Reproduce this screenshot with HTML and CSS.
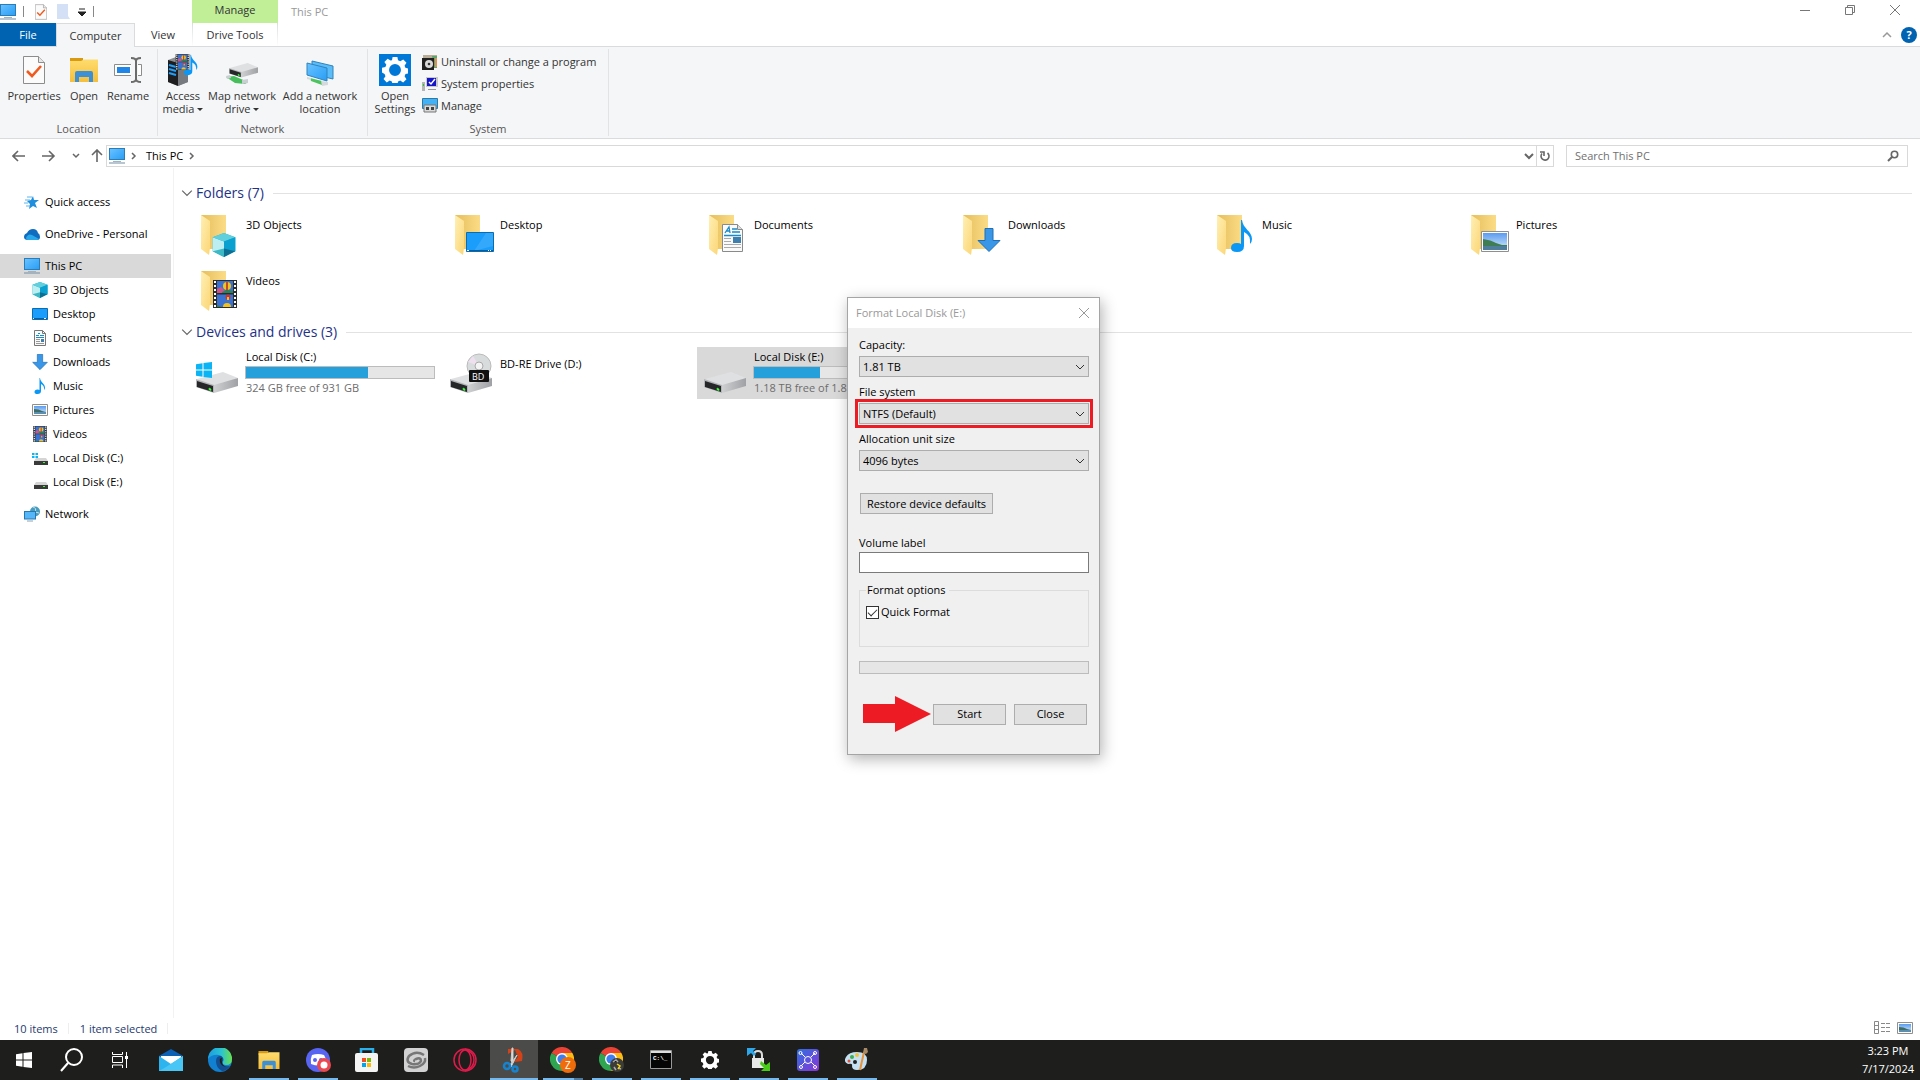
FILE: index.html
```html
<!DOCTYPE html>
<html lang="en">
<head>
<meta charset="utf-8">
<title>This PC</title>
<link rel="stylesheet" href="styles.css">
</head>
<body>
<svg class="sprite" aria-hidden="true">
  <defs>
    <linearGradient id="g-screen" x1="0" y1="0" x2="1" y2="1"><stop offset="0" stop-color="#6cc4ff"/><stop offset=".5" stop-color="#48b0fb"/><stop offset="1" stop-color="#2a9df4"/></linearGradient>
    <linearGradient id="g-back" x1="0" y1="0" x2="1" y2="0"><stop offset="0" stop-color="#e6be5c"/><stop offset="1" stop-color="#fbdc86"/></linearGradient>
    <linearGradient id="g-front" x1="0" y1="0" x2="1" y2="1"><stop offset="0" stop-color="#fff0b4"/><stop offset="1" stop-color="#fbd676"/></linearGradient>
    <linearGradient id="g-sky" x1="0" y1="0" x2="0" y2="1"><stop offset="0" stop-color="#5b9bf0"/><stop offset="1" stop-color="#d8ecfb"/></linearGradient>
    <linearGradient id="g-drive" x1="0" y1="0" x2="1" y2="0"><stop offset="0" stop-color="#cfd0d2"/><stop offset="1" stop-color="#a0a1a4"/></linearGradient>
    <linearGradient id="g-edge" x1="0" y1="0" x2="1" y2="0"><stop offset="0" stop-color="#1b9de2"/><stop offset=".55" stop-color="#2bc3d2"/><stop offset="1" stop-color="#6ae04f"/></linearGradient>
    <linearGradient id="g-hub" x1="0" y1="0" x2="1" y2="1"><stop offset="0" stop-color="#2f6fe0"/><stop offset="1" stop-color="#8a35d6"/></linearGradient>
    <linearGradient id="g-yel" x1="0" y1="0" x2="0" y2="1"><stop offset="0" stop-color="#ffdc6e"/><stop offset="1" stop-color="#f5bf3c"/></linearGradient>
  </defs>
  <symbol id="pc" viewBox="0 0 16 16"><rect x=".5" y=".5" width="15" height="11" fill="url(#g-screen)" stroke="#2b7db8"/><path d="M4 13h8v1H4z" fill="#9db4c6"/><path d="M0 14.500h16v1H0z" fill="#6f8da3"/></symbol>
  <symbol id="check-doc" viewBox="0 0 22 28"><path d="M.5.500h15l6 6v21H.5z" fill="#fbfbfb" stroke="#8c8c8c"/><path d="M15.500.5v6h6" fill="#e6e6e6" stroke="#8c8c8c"/><path d="M4 15l5 5 9-10" fill="none" stroke="#f05a1e" stroke-width="2.600"/></symbol>
  <symbol id="open-folder" viewBox="0 0 28 24"><path d="M0 0h13v5H0z" fill="#d99a12"/><path d="M0 3h11l3-1.500h14V24H0z" fill="url(#g-yel)"/><path d="M5 24V15q0-2 2-2h14q2 0 2 2v9h-4v-5H9v5z" fill="#3d8fd6"/></symbol>
  <symbol id="rename" viewBox="0 0 28 26"><path d="M17 7.500H.5v11H17M24 7.500h3.500v11H24" fill="#fff" stroke="#8c8c8c"/><path d="M3 10h13v6H3z" fill="#1f86e8"/><path d="M17 1q5 0 5 3 0-3 5-3M22 4v18M17 25q5 0 5-3 0 3 5 3" fill="none" stroke="#6b6b6b" stroke-width="2"/></symbol>
  <symbol id="film" viewBox="0 0 24 28"><path d="M0 0h24v28H0z" fill="#2d2d2d"/><path d="M4 1h16v12H4zM4 14.500h16V27H4z" fill="#3a72d4"/><path d="M2 1v26M22 1v26" stroke="#fff" stroke-width="2" stroke-dasharray="2 2"/><circle cx="14" cy="6" r="4" fill="#f2c21c"/><path d="M14 2v9" stroke="#b3242c" stroke-width="1.500"/><path d="M4 9l4-2 4 4v2H4z" fill="#c9558b"/><path d="M9 12l5-2 6 1v2H9z" fill="#278455"/><circle cx="15" cy="17" r="2.500" fill="#c8343a"/><path d="M14 17h2v3h-2z" fill="#f2c21c"/><path d="M10 27a4 4 0 018 0z" fill="#f2c21c"/><path d="M4 25l5 2H4z" fill="#278455"/></symbol>
  <symbol id="note" viewBox="0 0 22 32"><path d="M11 0c1 9 10 11 10 19q0 3-2 5 1-9-6-12v14q0 6-7 6-6 0-6-4 0-5 6-5 3 0 4 1V0z" fill="#0a97f5"/></symbol>
  <symbol id="media" viewBox="0 0 32 32"><path d="M1 6l8-3 12 3v22l-10 4L1 28z" fill="#8c8f93"/><path d="M1 6l10 3v23L1 28z" fill="#1e1e20"/><path d="M2 11l7 2M2 15l7 2M2 19l7 2" stroke="#1ea0ff" stroke-width="2"/><path d="M11 9l10-3v22l-10 4z" fill="#777b80"/><use href="#film" x="8" y="0" width="15" height="16"/><use href="#note" x="17" y="0" width="14" height="22"/></symbol>
  <symbol id="drive" viewBox="0 0 42 22"><path d="M1 8L27 1l15 6-24 10z" fill="#dfe0e2"/><path d="M18 14l24-7v8l-24 7z" fill="url(#g-drive)"/><path d="M0 8l18 6v8L0 16z" fill="#b4b5b8"/><path d="M1 10l16 5v6L1 16z" fill="#262728"/><path d="M13 17l2 1v1.500l-2-.7z" fill="#3dff3d" stroke="#3dff3d" stroke-width=".6"/></symbol>
  <symbol id="net-drive" viewBox="0 0 32 22"><path d="M0 15l8-1 14 6-3 2-10-1z" fill="#48bd5c"/><path d="M0 14l4-1 1 3-4 1zM16 18l6-1v4l-6 1z" fill="#c9ced3"/><use href="#drive" x="3" y="0" width="29" height="16"/></symbol>
  <symbol id="net-loc" viewBox="0 0 28 26"><path d="M6 1l21 5v13L6 14z" fill="#5abcf8" stroke="#2f83bd"/><path d="M1 3l20 5v13L1 15z" fill="url(#g-screen)" stroke="#2f83bd"/><path d="M4 18l12 3v4L5 21z" fill="#4cc35e"/><path d="M1 17l4 1v2l-4-1zM15 21l7 1v3l-6 1z" fill="#d5d9dc"/></symbol>
  <symbol id="gear" viewBox="0 0 24 24"><path fill-rule="evenodd" d="M9.800 0h4.400l.6 3.100 2.100.9 2.700-1.800 3 3.100-1.800 2.700.8 2 3.200.7v4.300l-3.100.7-.9 2.100 1.800 2.700-3.100 3-2.700-1.800-2 .8-.6 3.200H9.800l-.7-3.100-2-.9-2.700 1.800-3-3.100 1.800-2.700-.8-2L0 14.300V9.900l3.100-.6.9-2.100-1.800-2.700 3-3L7.900 3.300l1.300-.4zM12 6.500a5.500 5.500 0 100 11 5.500 5.500 0 000-11z"/></symbol>
  <symbol id="settings" viewBox="0 0 32 32"><path d="M0 0h32v32H0z" fill="#0078d7"/><use href="#gear" x="3" y="3" width="26" height="26" fill="#fff"/></symbol>
  <symbol id="uninstall" viewBox="0 0 16 16"><path d="M1 1h14v5H1z" fill="#b9ad98"/><path d="M10 2h5v12h-3z" fill="#5aa66b"/><path d="M0 4h12v12H0z" fill="#202020"/><circle cx="7" cy="10" r="4" fill="#d9d9d9"/><circle cx="7" cy="10" r="1.300" fill="#333"/><path d="M13 4h2v9h-2z" fill="#e88b5a"/></symbol>
  <symbol id="sysprop" viewBox="0 0 16 16"><path d="M0 6h3v9H0z" fill="#b5b5b5"/><path d="M1 8h1v2H1z" fill="#2c2"/><path d="M4 1h12v10H4z" fill="#c9c9c9"/><path d="M5 2h9v8H5z" fill="#1616c8"/><path d="M7 6l2 2 4-5" fill="none" stroke="#fff" stroke-width="1.500"/><path d="M6 13h8v1H6z" fill="#999"/></symbol>
  <symbol id="manage" viewBox="0 0 16 16"><path d="M.5.500h15v10H.5z" fill="#43b1f5" stroke="#2e78a6"/><path d="M2 7h12v7H2z" fill="#dadada" stroke="#777"/><path d="M4 9h3v3H4zM9 9h3v3H9z" fill="#444"/></symbol>
  <symbol id="star" viewBox="0 0 16 16"><path d="M9 2l1 4 5 0-4 3 2 5-4-2-4 3 1-5-3-3 4-1z" fill="#1f8fdd"/><path d="M3 3h5M1 6h5M0 9h4M2 12h4" stroke="#58b4ee"/></symbol>
  <symbol id="cloud" viewBox="0 0 16 11"><path d="M4 11q-4 0-4-3t3-4q2-4 6-4 4 0 5 4 2 1 2 4t-3 3z" fill="#0f6cbf"/><path d="M4 11q-2 0-2-2 2-5 6-3l7 4q-1 1-2 1z" fill="#28a8ea"/></symbol>
  <symbol id="cube" viewBox="0 0 16 17"><path d="M8 0l8 3v10l-8 4-8-4V3z" fill="#18b1d0"/><path d="M0 3l8 3v8l-8-1z" fill="#bdeef2"/><path d="M8 0l8 3-8 3-8-3z" fill="#62cfdc"/><path d="M8 6l8-3v10l-8 1z" fill="#0aa0d0"/><path d="M0 13l8-2v6z" fill="#3db9c6"/><path d="M16 13l-8-2v6z" fill="#0f6f93"/></symbol>
  <symbol id="desk" viewBox="0 0 28 20"><path d="M.5.500h27v19H.5z" fill="#1a9dfb" stroke="#0b6cb0"/><path d="M27 1v13L8 19 20 1z" fill="#46b0fd" opacity=".6"/><path d="M1 18h26v1H1z" fill="#0b5c98"/><path d="M1 18h2v1H1zM22 18h1v1h-1zM24 18h1v1h-1z" fill="#fff"/></symbol>
  <symbol id="desk16" viewBox="0 0 16 12"><path d="M.5.500h15v11H.5z" fill="#1a9dfb" stroke="#0b6cb0"/><path d="M1 10h14v1H1z" fill="#0b5c98"/><path d="M1 10h1v1H1zM12 10h2v1h-2z" fill="#fff"/></symbol>
  <symbol id="doc" viewBox="0 0 21 28"><path d="M.5.500h15l5 5v22H.5z" fill="#fafafa" stroke="#8a8a8a"/><path d="M15.500.5v5h5" fill="#ddd" stroke="#8a8a8a"/><path d="M3 9l4-6 1 6M4 7h4M10 5h5M10 8h8M2 11.500h17" fill="none" stroke="#1b8ac8" stroke-width="1.300"/><path d="M11 13h8v6h-8z" fill="#3e7fae"/><path d="M2 14.500h7M2 17.500h7M2 20.500h17M2 23.500h17" stroke="#aaa"/></symbol>
  <symbol id="doc16" viewBox="0 0 12 16"><path d="M.5.500h8l3 3v12H.5z" fill="#fafafa" stroke="#777"/><path d="M8.500.5v3h3" fill="none" stroke="#777"/><path d="M2 5.500h3M4 3.500h2M6 5.500h4M2 7.500h8" stroke="#1b8ac8"/><path d="M7 9h3v3H7z" fill="#3e7fae"/><path d="M2 9.500h4M2 11.500h4M2 13.500h8" stroke="#999"/></symbol>
  <symbol id="down" viewBox="0 0 24 24"><path d="M8 .5h8v12h7L12 23.500 1 12.500h7z" fill="#3a97e8" stroke="#1d6fb8"/></symbol>
  <symbol id="pic" viewBox="0 0 28 21"><path d="M.5.500h27v20H.5z" fill="#fff" stroke="#8f8f8f"/><path d="M2 2h24v17H2z" fill="url(#g-sky)"/><path d="M2 8q8 1 13 4l6 2 5 0v2H2z" fill="#3f7d55"/><path d="M2 15h24v4H2z" fill="#4f7d9c"/></symbol>
  <symbol id="pic16" viewBox="0 0 16 12"><path d="M.5.500h15v11H.5z" fill="#fff" stroke="#8f8f8f"/><path d="M2 2h12v8H2z" fill="url(#g-sky)"/><path d="M2 5q5 0 8 2l4 1H2z" fill="#3f6d65"/><path d="M2 8h12v2H2z" fill="#5b8fb0"/></symbol>
  <symbol id="sdrive" viewBox="0 0 16 16"><path d="M4 8h10l2 3H2z" fill="#d5d5d5"/><path d="M2 11h14v4H2z" fill="#3a3a3a"/><path d="M11 12h2v1h-2z" fill="#3f3"/></symbol>
  <symbol id="win" viewBox="0 0 16 16"><path d="M0 2.200l6.500-.9v6.200H0zM7.500 1.100L16 0v7.500H7.500zM0 8.500h6.500v6.200L0 13.800zM7.500 8.500H16V16l-8.500-1.100z"/></symbol>
  <symbol id="sdrive-c" viewBox="0 0 16 16"><use href="#sdrive" width="16" height="16"/><path d="M0 3h2.500v2H0zM3.500 3H6v2H3.500zM0 6h2.500v2H0zM3.500 6H6v2H3.500z" fill="#0bb5f5"/></symbol>
  <symbol id="network" viewBox="0 0 16 16"><circle cx="11" cy="5.500" r="5" fill="#4a9cbf"/><path d="M9 1q4 1 2 5l4 1" stroke="#c5e4ee" fill="none"/><rect x=".5" y="5.500" width="11" height="7.500" fill="#55b7f9" stroke="#2878b0"/><path d="M3 15h6" stroke="#8ba2b3"/></symbol>
  <symbol id="folder" viewBox="0 0 36 42"><path d="M0 0h25v34H0z" fill="url(#g-back)"/><path d="M0 0l9 6v27l-1 7-8-6z" fill="url(#g-front)"/></symbol>
  <symbol id="chev-d" viewBox="0 0 10 10"><path d="M1 3l4 4 4-4" fill="none" stroke="currentColor"/></symbol>
  <symbol id="chev-r" viewBox="0 0 10 10"><path d="M3 2l3 3-3 3" fill="none" stroke="currentColor" stroke-width="1.500"/></symbol>
  <symbol id="close" viewBox="0 0 10 10"><path d="M0 0l10 10M10 0L0 10" stroke="currentColor"/></symbol>
  <symbol id="chrome" viewBox="0 0 24 24"><path d="M12 12L1.600 6A12 12 0 0122.400 6z" fill="#ea4335"/><path d="M12 12L1.600 6A12 12 0 0012 24l5.500-9z" fill="#2fa552"/><path d="M12 12h0V6h10.400A12 12 0 0112 24l6-10z" fill="#fbbc14"/><circle cx="12" cy="12" r="6" fill="#fff"/><circle cx="12" cy="12" r="4.600" fill="#3d7ff0"/></symbol>
</svg>

<div class="desktop">
<header>
  <div class="titlebar">
    <div class="quick">
      <svg width="16" height="16"><use href="#pc"/></svg><i></i>
      <svg width="12" height="16"><use href="#check-doc"/></svg>
      <svg width="13" height="16" viewBox="0 0 13 16"><path d="M0 0h11v12l2 3H0z" fill="#d3e0f5"/></svg>
      <svg width="8" height="8" viewBox="0 0 8 8"><path d="M1 1h6M0 4h8L4 8z" stroke="#222" stroke-width="1" fill="#222"/></svg><i></i>
    </div>
    <div class="context">Manage</div>
    <h1>This PC</h1>
    <div class="winctl">
      <button aria-label="Minimize"><svg width="10" height="10"><path d="M0 5.500h10" stroke="#777"/></svg></button>
      <button aria-label="Restore"><svg width="10" height="10" fill="none" stroke="#777"><path d="M.5 2.500h7v7h-7zM2.500 2.500v-2h7v7h-2"/></svg></button>
      <button aria-label="Close"><svg width="10" height="10"><use href="#close"/></svg></button>
    </div>
  </div>
  <nav class="tabs">
    <button class="tab file">File</button>
    <button class="tab computer">Computer</button>
    <button class="tab view">View</button>
    <button class="tab tools">Drive Tools</button>
    <div class="tabs-end"><button aria-label="Collapse ribbon"><svg width="10" height="10"><path d="M1 7l4-4 4 4" fill="none" stroke="#999" stroke-width="1.500"/></svg></button><button class="help" aria-label="Help">?</button></div>
  </nav>
  <div class="ribbon">
    <section class="group location">
      <div class="tools-row">
        <button class="big w60"><span class="ico"><svg width="22" height="28"><use href="#check-doc"/></svg></span>Properties</button>
        <button class="big w40"><span class="ico"><svg width="28" height="24"><use href="#open-folder"/></svg></span>Open</button>
        <button class="big w48"><span class="ico"><svg width="28" height="26"><use href="#rename"/></svg></span>Rename</button>
      </div>
      <h2>Location</h2>
    </section>
    <section class="group network">
      <div class="tools-row">
        <button class="big w42"><span class="ico"><svg width="32" height="32"><use href="#media"/></svg></span>Access<br>media<b class="tri"></b></button>
        <button class="big w76"><span class="ico low"><svg width="32" height="22"><use href="#net-drive"/></svg></span>Map network<br>drive<b class="tri"></b></button>
        <button class="big w80"><span class="ico low"><svg width="28" height="26"><use href="#net-loc"/></svg></span>Add a network<br>location</button>
      </div>
      <h2>Network</h2>
    </section>
    <section class="group system">
      <div class="tools-row">
        <button class="big w46"><span class="ico"><svg width="32" height="32"><use href="#settings"/></svg></span>Open<br>Settings</button>
        <div class="smalls">
          <button><svg width="16" height="16"><use href="#uninstall"/></svg>Uninstall or change a program</button>
          <button><svg width="16" height="16"><use href="#sysprop"/></svg>System properties</button>
          <button><svg width="16" height="16"><use href="#manage"/></svg>Manage</button>
        </div>
      </div>
      <h2>System</h2>
    </section>
  </div>
  <div class="address">
    <div class="nav">
      <button aria-label="Back"><svg width="14" height="12" viewBox="0 0 14 12"><path d="M13 6H1M6 1L1 6l5 5" fill="none" stroke="currentColor" stroke-width="1.600"/></svg></button>
      <button aria-label="Forward"><svg width="14" height="12" viewBox="0 0 14 12"><path d="M0 6h12M7 1l5 5-5 5" fill="none" stroke="currentColor" stroke-width="1.600"/></svg></button>
      <button class="recent" aria-label="Recent locations"><svg width="8" height="8" viewBox="0 0 8 8"><path d="M1 2l3 3 3-3" fill="none" stroke="currentColor" stroke-width="1.500"/></svg></button>
      <button aria-label="Up"><svg width="12" height="14" viewBox="0 0 12 14"><path d="M6 13V1M1 6l5-5 5 5" fill="none" stroke="currentColor" stroke-width="1.600"/></svg></button>
    </div>
    <div class="path">
      <svg width="16" height="16"><use href="#pc"/></svg>
      <svg class="sep" width="10" height="10"><use href="#chev-r"/></svg>
      <a href="#pc">This PC</a>
      <svg class="sep" width="10" height="10"><use href="#chev-r"/></svg>
      <button class="drop" aria-label="Previous locations"><svg width="10" height="10"><path d="M1 3l4 4 4-4" fill="none" stroke="#666" stroke-width="2"/></svg></button>
      <button class="refresh" aria-label="Refresh"><svg width="12" height="12" viewBox="0 0 12 12"><path d="M8.500 3A4 4 0 113 3.500M1 2h4v4" fill="none" stroke="#666" stroke-width="1.600"/></svg></button>
    </div>
    <label class="search"><input type="text" placeholder="Search This PC" aria-label="Search This PC"><svg width="12" height="12"><circle cx="7.500" cy="4.500" r="3.200" fill="none" stroke="#666" stroke-width="1.600"/><path d="M5 7L1 11" stroke="#666" stroke-width="2"/></svg></label>
  </div>
</header>

<div class="body">
  <nav class="side">
    <a href="#q" class="top"><svg width="16" height="16"><use href="#star"/></svg>Quick access</a>
    <a href="#o" class="top"><svg width="16" height="11"><use href="#cloud"/></svg>OneDrive - Personal</a>
    <a href="#t" class="on"><svg width="16" height="16"><use href="#pc"/></svg>This PC</a>
    <a href="#1" class="sub"><svg width="16" height="16"><use href="#cube"/></svg>3D Objects</a>
    <a href="#2" class="sub"><svg width="16" height="12"><use href="#desk16"/></svg>Desktop</a>
    <a href="#3" class="sub"><svg width="16" height="16"><use href="#doc16"/></svg>Documents</a>
    <a href="#4" class="sub"><svg width="16" height="16"><use href="#down"/></svg>Downloads</a>
    <a href="#5" class="sub"><svg width="16" height="16"><use href="#note"/></svg>Music</a>
    <a href="#6" class="sub"><svg width="16" height="12"><use href="#pic16"/></svg>Pictures</a>
    <a href="#7" class="sub"><svg width="16" height="16"><use href="#film"/></svg>Videos</a>
    <a href="#8" class="sub"><svg width="16" height="16"><use href="#sdrive-c"/></svg>Local Disk (C:)</a>
    <a href="#9" class="sub last"><svg width="16" height="16"><use href="#sdrive"/></svg>Local Disk (E:)</a>
    <a href="#n"><svg width="16" height="16"><use href="#network"/></svg>Network</a>
  </nav>
  <main>
    <h2 class="head"><svg width="12" height="12"><use href="#chev-d"/></svg>Folders (7)</h2>
    <div class="tiles">
      <div class="tile"><svg width="48" height="48"><use href="#folder" x="6" y="5" width="36" height="42"/><use href="#cube" x="17" y="23" width="24" height="24"/></svg><span>3D Objects</span></div>
      <div class="tile"><svg width="48" height="48"><use href="#folder" x="6" y="5" width="36" height="42"/><use href="#desk" x="17" y="22" width="28" height="20"/></svg><span>Desktop</span></div>
      <div class="tile"><svg width="48" height="48"><use href="#folder" x="6" y="5" width="36" height="42"/><use href="#doc" x="19" y="14" width="21" height="28"/></svg><span>Documents</span></div>
      <div class="tile"><svg width="48" height="48"><use href="#folder" x="6" y="5" width="36" height="42"/><use href="#down" x="20" y="18" width="24" height="24"/></svg><span>Downloads</span></div>
      <div class="tile"><svg width="48" height="48"><use href="#folder" x="6" y="5" width="36" height="42"/><use href="#note" x="20" y="10" width="22" height="32"/></svg><span>Music</span></div>
      <div class="tile"><svg width="48" height="48"><use href="#folder" x="6" y="5" width="36" height="42"/><use href="#pic" x="16" y="21" width="28" height="21"/></svg><span>Pictures</span></div>
      <div class="tile"><svg width="48" height="48"><use href="#folder" x="6" y="5" width="36" height="42"/><use href="#film" x="18" y="14" width="24" height="28"/></svg><span>Videos</span></div>
    </div>
    <h2 class="head"><svg width="12" height="12"><use href="#chev-d"/></svg>Devices and drives (3)</h2>
    <div class="tiles">
      <div class="tile disk"><svg width="48" height="48"><use href="#drive" x="1" y="22" width="42" height="22"/><use href="#win" x="1" y="13" width="16" height="16" fill="#0bb5f5"/></svg><div><span>Local Disk (C:)</span><div class="bar"><i style="width:65%"></i></div><small>324 GB free of 931 GB</small></div></div>
      <div class="tile"><svg width="48" height="48"><use href="#drive" x="1" y="22" width="42" height="22"/><circle cx="30" cy="17" r="12" fill="#d8dcdc" stroke="#bbb"/><path d="M30 17l-11-4 5-6z" fill="#efe0f0"/><circle cx="30" cy="17" r="4" fill="#f4f4f4" stroke="#aaa"/><rect x="20" y="21" width="20" height="12" rx="1" fill="#111"/><text x="23" y="31" class="bd">BD</text></svg><span>BD-RE Drive (D:)</span></div>
      <div class="tile disk sel"><svg width="48" height="48"><use href="#drive" x="1" y="22" width="42" height="22"/></svg><div><span>Local Disk (E:)</span><div class="bar"><i style="width:35%"></i></div><small>1.18 TB free of 1.81 TB</small></div></div>
    </div>
  </main>
</div>

<div class="status">
  <span>10 items</span><span>1 item selected</span>
  <div><button aria-label="Details view"><svg width="17" height="14" viewBox="0 0 17 14" fill="none" stroke="#888"><path d="M.5.500h4v12h-4zM.5 4.500h4M.5 8.500h4M7 2.500h4M12 2.500h4M7 6.500h4M12 6.500h4M7 10.500h4M12 10.500h4"/></svg></button><button aria-label="Large icons view"><svg width="16" height="12"><use href="#pic16"/></svg></button></div>
</div>

<footer class="taskbar">
  <button aria-label="Start"><svg width="16" height="16" fill="#fff"><use href="#win"/></svg></button>
  <button aria-label="Search"><svg width="24" height="24" fill="none" stroke="#fff" stroke-width="2"><circle cx="14" cy="9" r="8"/><path d="M8 15l-7 8"/></svg></button>
  <button class="view-btn" aria-label="Task view"><svg width="16" height="16" viewBox="0 0 16 16" fill="none" stroke="#fff"><path d="M.5 0v2.500h10V0M.5 4.500h10v6H.5zM.5 16v-3h10v3M14.500 0v16"/><path d="M13 4h3v3h-3z" fill="#fff" stroke="none"/></svg></button>
  <button aria-label="Mail"><svg width="24" height="24"><path d="M0 8l12-7 12 7v15H0z" fill="#0c61b4"/><path d="M2 8h20v4l-10 6L2 12z" fill="#fff"/><path d="M0 8l12 8 12-8v15H0z" fill="#2db4ef"/><path d="M24 8L7 19l-7 4h24z" fill="#48c6f6"/></svg></button>
  <button aria-label="Edge"><svg width="24" height="24"><circle cx="12" cy="12" r="12" fill="#1280d0"/><path d="M0 11A12 12 0 0124 11q0 6-6 6-4 0-3-3 2-5-4-7Q4 6 0 11z" fill="url(#g-edge)"/><path d="M8 13q0-5 5-5 4 3 1 6 0 5 8 4-3 5-8 5-6-3-6-10z" fill="#124e90"/><path d="M14 14q-1-2 0-4-3 0-2 4 1 4 6 5-4-2-4-5z" fill="#1e1f1c"/></svg></button>
  <button class="run" aria-label="File Explorer"><svg width="22" height="18"><use href="#open-folder"/></svg></button>
  <button class="run" aria-label="Discord"><svg width="26" height="26"><circle cx="13" cy="13" r="12" fill="#5865f2"/><path d="M7 8q6-2 12 0 3 5 2 9-7 3-15 0-1-5 1-9z" fill="#fff"/><circle cx="10" cy="13" r="2" fill="#5865f2"/><circle cx="16" cy="13" r="2" fill="#5865f2"/><circle cx="19" cy="18" r="7" fill="#ea4a4f"/><circle cx="19" cy="18" r="3.500" fill="#fff"/></svg></button>
  <button aria-label="Microsoft Store"><svg width="24" height="24"><path d="M6 6V1h12v5" fill="none" stroke="#2bb0ee" stroke-width="2.500"/><rect y="5" x="0" width="23" height="19" rx="2" fill="#f4f4f4"/><path d="M7 10h4v4H7z" fill="#f25022"/><path d="M12 10h4v4h-4z" fill="#7fba00"/><path d="M7 15h4v4H7z" fill="#00a4ef"/><path d="M12 15h4v4h-4z" fill="#ffb900"/></svg></button>
  <button aria-label="Spiral app"><svg width="24" height="24"><rect width="24" height="24" rx="4" fill="#d2d2d2"/><path d="M20 7Q12 2 5 8q-4 6 3 8 7 1 9-3 0-4-5-2-3 2-1 2M4 18q6 3 12 0 6-3 5-8" fill="none" stroke="#777" stroke-width="2.500"/></svg></button>
  <button aria-label="Opera GX"><svg width="24" height="24" fill="none" stroke="#e01b4c" stroke-width="1.500"><circle cx="12" cy="12" r="11"/><ellipse cx="12" cy="12" rx="6" ry="10"/><path d="M12 1q9 3 9 11t-9 11"/></svg></button>
  <button class="run active" aria-label="Snipping Tool"><svg width="24" height="26"><path d="M6 2h10q6 3 4 12l-8 1 4-5-3-7-7 4z" fill="#d64218"/><path d="M10 1h1v15l-2-2zM15 8l-6 12-1-2z" fill="#e4e4e4" stroke="#ccc"/><circle cx="5" cy="19" r="3" fill="none" stroke="#1683d0" stroke-width="2.500"/><circle cx="13" cy="22" r="2.500" fill="none" stroke="#1683d0" stroke-width="2.500"/></svg></button>
  <button class="run multi" aria-label="Chrome"><svg width="26" height="26"><use href="#chrome" width="24" height="24"/><circle cx="18" cy="18" r="8" fill="#ee6c0a"/><text x="15" y="22" class="badge">Z</text></svg></button>
  <button class="run" aria-label="Chrome profile 2"><svg width="26" height="26"><use href="#chrome" width="24" height="24"/><circle cx="18" cy="18" r="7" fill="#3c3c38"/><path d="M14 15l3-2 2 2M19 21l3 1M15 20l2 3" stroke="#aaa" stroke-width="1.500"/><path d="M18 17l3 2-2 3" stroke="#f2d21c" stroke-width="1.500" fill="none"/></svg></button>
  <button class="run" aria-label="Command Prompt"><svg width="22" height="20"><path d="M.5.500h21v18H.5z" fill="#050505" stroke="#999"/><path d="M1 1h20v2H1z" fill="#ddd"/><text x="3" y="10" class="cmd">C:\_</text></svg></button>
  <button class="run" aria-label="Settings"><svg width="18" height="18" fill="#fff"><use href="#gear"/></svg></button>
  <button class="run" aria-label="Lock"><svg width="24" height="26"><path d="M7 12V8q0-4 4-4t4 4v4" fill="none" stroke="#ddd" stroke-width="2"/><path d="M5 11h12v10H5z" fill="#e8e8e8"/><path d="M0 1h9L6 4l3 3-2 2-3-3-4 3z" fill="#2ea7ea"/><path d="M14 14l5 4 4-3v9h-9l3-3-4-4z" fill="#49cc18"/></svg></button>
  <button class="run" aria-label="Hub"><svg width="22" height="22"><rect width="22" height="22" rx="3" fill="url(#g-hub)"/><g fill="none" stroke="#fff"><circle cx="11" cy="11" r="3.500"/><path d="M4 4l4 4M18 4l-4 4M4 17l4-4M18 17l-4-4"/><circle cx="3.500" cy="4" r="1.500"/><circle cx="18" cy="4" r="1.500"/><circle cx="4" cy="18" r="1.500"/><circle cx="18" cy="18" r="1.500"/></g></svg></button>
  <button class="run" aria-label="Paint"><svg width="24" height="26"><path d="M12 5q10 0 10 8 0 10-10 10-5 0-5-4 1-3-4-2-5-2-2-7 3-5 11-5z" fill="#c4e0f2"/><circle cx="7" cy="10" r="2" fill="#3cae4e"/><circle cx="12" cy="8" r="2" fill="#f0c132"/><circle cx="4" cy="14" r="1.500" fill="#e0533a"/><circle cx="10" cy="15" r="2" fill="#222"/><path d="M19 5l-4 18" stroke="#e8923a" stroke-width="2"/><path d="M18 6l1-5 3 0 1 4-2 2z" fill="#a98a66"/></svg></button>
  <time>3:23 PM<br>7/17/2024</time>
</footer>

<form class="dialog" aria-label="Format Local Disk (E:)">
  <div class="dlg-title"><span>Format Local Disk (E:)</span><button type="button" aria-label="Close dialog"><svg width="10" height="10"><use href="#close"/></svg></button></div>
  <div class="dlg-body">
    <label for="cap">Capacity:</label>
    <div class="combo"><select id="cap"><option>1.81 TB</option></select><svg width="10" height="10"><use href="#chev-d"/></svg></div>
    <label for="fs">File system</label>
    <div class="combo marked"><select id="fs"><option>NTFS (Default)</option></select><svg width="10" height="10"><use href="#chev-d"/></svg></div>
    <label for="au">Allocation unit size</label>
    <div class="combo"><select id="au"><option>4096 bytes</option></select><svg width="10" height="10"><use href="#chev-d"/></svg></div>
    <button type="button" class="btn restore">Restore device defaults</button>
    <label for="vol">Volume label</label>
    <input type="text" id="vol" class="vol">
    <fieldset><legend>Format options</legend><label class="quickfmt"><input type="checkbox" checked>Quick Format</label></fieldset>
    <div class="progress"></div>
    <div class="actions"><svg width="68" height="36" viewBox="0 0 68 36"><path d="M0 8h32V0l36 18-36 18v-9H0z" fill="#ed1c24"/></svg><button type="button" class="btn">Start</button><button type="button" class="btn">Close</button></div>
  </div>
</form>
</div>
</body>
</html>
```
FILE: styles.css
```css
* { box-sizing: border-box; }
body { margin: 0; font: 11px/16px "Open Sans", "Noto Sans", sans-serif; color: #000; background: #fff; }
button, input, select { font: inherit; color: inherit; border: 0; padding: 0; margin: 0; background: none; border-radius: 0; }
h1, h2 { margin: 0; font: inherit; }
a { color: inherit; text-decoration: none; }
svg { display: block; flex: none; }
.sprite { position: absolute; width: 0; height: 0; }
.desktop { position: relative; display: flex; flex-direction: column; min-height: 100vh; }

/* title bar and ribbon tabs */
.titlebar { display: flex; height: 23px; }
.quick { display: flex; align-items: center; width: 192px; }
.quick i { width: 1px; height: 11px; background: #888; margin: 0 11px 0 7px; }
.quick svg + svg { margin-left: 10px; }
.quick svg + i { margin-left: 7px; }
.quick svg:nth-of-type(4) { margin-left: 8px; }
.context { width: 86px; background: #c1ef98; text-align: center; line-height: 20px; color: #333; }
h1 { flex: 1; padding-left: 13px; line-height: 23px; color: #999; }
.winctl { display: flex; color: #777; padding-right: 3px; }
.winctl button { width: 45px; display: grid; place-items: center; padding-bottom: 3px; }
.tabs { display: flex; height: 24px; border-bottom: 1px solid #dadbdc; color: #333; }
.tab { width: 56px; }
.file { background: #0063b1; color: #fff; }
.computer { width: 79px; height: 24px; background: #f5f6f7; border: 1px solid #dadbdc; border-bottom: 0; }
.view { margin-right: 1px; }
.tools { width: 86px; border: 1px solid; border-image: linear-gradient(#dadbdc, #fff) 1; border-width: 0 1px; }
.tabs-end { flex: 1; display: flex; justify-content: flex-end; align-items: center; gap: 9px; padding-right: 3px; }
.help { width: 16px; height: 16px; border-radius: 50%; background: #0063b1; color: #fff; font-weight: 700; line-height: 16px; }

/* ribbon */
.ribbon { display: flex; height: 92px; background: #f5f6f7; border-bottom: 1px solid #dadbdc; padding-top: 2px; color: #333; }
.group { display: flex; flex-direction: column; justify-content: space-between; height: 87px; padding: 0 4px; border-right: 1px solid #e2e3e4; }
.group h2 { text-align: center; line-height: 14px; color: #555; }
.location { width: 158px; }
.network { width: 210px; }
.system { width: 241px; }
.tools-row { display: flex; }
.big { line-height: 13px; text-align: center; white-space: nowrap; display: block; align-self: flex-start; }
.ico { display: grid; place-items: center; height: 40px; padding: 4px 0 2px; }
.ico.low { padding-top: 10px; }
.w40 { width: 40px; } .w42 { width: 42px; } .w46 { width: 46px; } .w48 { width: 48px; } .w60 { width: 60px; } .w76 { width: 76px; } .w80 { width: 80px; }
.tri { display: inline-block; border: 3px solid transparent; border-top-color: #333; border-bottom: 0; margin: 0 0 2px 3px; }
.smalls { display: flex; flex-direction: column; padding: 2px 0 0 4px; }
.smalls button { display: flex; align-items: center; gap: 3px; height: 22px; white-space: nowrap; }

/* address row */
.address { display: flex; align-items: center; padding: 5px 12px 0; height: 28px; margin-bottom: 1px; }
.nav { display: flex; align-items: center; color: #666; width: 94px; gap: 16px; }
.nav .recent { margin-right: -6px; }
.nav .recent + button { margin-left: 1px; }
.path { flex: 1; display: flex; align-items: center; height: 22px; border: 1px solid #d9d9d9; padding-left: 2px; }
.path .sep { color: #666; margin: 0 4px; }
.path a { margin: 0 0 0 3px; }
.drop { margin-left: auto; margin-right: 2px; }
.refresh { width: 17px; height: 20px; border-left: 1px solid #d9d9d9; display: grid; place-items: center; }
.search { display: flex; align-items: center; width: 342px; height: 22px; border: 1px solid #d9d9d9; margin-left: 12px; padding: 0 8px; }
.search input { flex: 1; outline: 0; }
.search input::placeholder { color: #707070; opacity: 1; }

/* explorer body */
.body { flex: 1; display: flex; }
.side { width: 174px; border-right: 1px solid #f2f2f2; padding: 22px 2px 0 0; }
.side a { display: flex; align-items: center; gap: 5px; height: 24px; padding-left: 24px; }
.side .top, .side .last { margin-bottom: 8px; }
.side .on { background: #d9d9d9; }
.side .sub { padding-left: 32px; }
main { flex: 1; padding: 13px 8px 0 7px; }
.head { display: flex; align-items: center; height: 24px; font-size: 14px; color: #1e3287; }
.head svg { color: #666; margin-right: 3px; }
.head::after { content: ""; flex: 1; height: 1px; background: #e2e2e2; margin-left: 9px; }
.tiles { display: grid; grid-template-columns: repeat(auto-fill, 246px); gap: 4px 8px; padding: 3px 0 4px 8px; }
.tile { display: flex; height: 52px; padding-left: 6px; gap: 3px; }
.tile svg { margin-top: 2px; }
.tile > span { padding-top: 9px; }
.tile > div { width: 189px; padding-top: 2px; }
.tile.sel { background: #d9d9d9; }
.bar { height: 13px; border: 1px solid #bcbcbc; background: #e6e6e6; margin: 1px 0 1px -1px; }
.bar i { display: block; height: 11px; background: #26a0da; }
small { display: block; font-size: 11px; color: #6d6d6d; white-space: nowrap; }
.bd { font-size: 9px; fill: #fff; }
.badge { font-size: 10px; fill: #fff; }
.cmd { font: 700 6px "Liberation Mono", monospace; fill: #fff; }

/* status bar and taskbar */
.status { display: flex; align-items: center; height: 22px; padding: 0 7px 2px 14px; color: #1e3a6e; }
.status span { padding-right: 10px; margin-right: 11px; border-right: 1px solid #eee; height: 11px; line-height: 11px; }
.status div { margin-left: auto; display: flex; align-items: center; gap: 6px; }
.taskbar { display: flex; height: 40px; background: #1e1f1c; color: #fff; }
.taskbar button { width: 48px; margin-right: 1px; display: grid; place-items: center; position: relative; }
.taskbar button:nth-child(-n+2) { margin-right: 0; }
.taskbar .view-btn { margin-right: 3px; }
.taskbar .run::after { content: ""; position: absolute; left: 4px; right: 4px; bottom: 0; height: 2px; background: #76b9ed; }
.taskbar .active { background: #4b4c4a; }
.taskbar .active::after { left: 0; right: 0; }
.taskbar .multi::after { background: linear-gradient(90deg, #76b9ed 31px, #4f7ba0 31px); }
time { margin-left: auto; padding: 2px 6px 0 0; text-align: center; line-height: 18px; }

/* format dialog window */
.dialog { position: absolute; left: 847px; top: 297px; width: 253px; border: 1px solid #a5a5a5; background: #f0f0f0; box-shadow: 2px 4px 14px rgba(0, 0, 0, .3); }
.dlg-title { display: flex; justify-content: space-between; align-items: center; height: 30px; background: #fff; color: #999; padding: 0 10px 0 8px; }
.dlg-body { display: flex; flex-direction: column; padding: 9px 10px 22px 11px; }
.dlg-body > label { height: 19px; line-height: 16px; }
.combo { display: grid; height: 21px; margin-bottom: 7px; }
.combo select { grid-area: 1 / 1; appearance: none; border: 1px solid #adadad; background: #e1e1e1; padding: 0 3px; }
.combo svg { grid-area: 1 / 1; place-self: center end; margin-right: 4px; pointer-events: none; color: #333; }
.marked { outline: 3px solid #ed1c24; outline-offset: 1px; }
.btn { height: 21px; width: 73px; border: 1px solid #adadad; background: #e1e1e1; }
.restore { width: 133px; margin: 15px 0 21px 1px; }
.dlg-body > .restore + label { height: 17px; }
.vol { height: 21px; border: 1px solid #7a7a7a; background: #fff; padding: 0 3px; }
fieldset { border: 1px solid #dcdcdc; margin: 9px 0 0; padding: 6px 6px 0; height: 65px; }
legend { padding: 0 3px 0 1px; line-height: 16px; }
.quickfmt { display: flex; align-items: center; gap: 2px; }
.quickfmt input { appearance: none; width: 13px; height: 13px; border: 1px solid #333; background: #fff; display: grid; place-items: center; }
.quickfmt input:checked::before { content: ""; width: 8px; height: 4px; border: solid #333; border-width: 0 0 1px 1px; transform: translateY(-1px) rotate(-45deg); }
.progress { height: 13px; border: 1px solid #bcbcbc; background: #e6e6e6; margin: 14px 0 22px; }
.actions { display: flex; align-items: center; justify-content: flex-end; padding-right: 2px; }
.actions svg { margin-right: 2px; }
.actions .btn + .btn { margin-left: 8px; }
```
